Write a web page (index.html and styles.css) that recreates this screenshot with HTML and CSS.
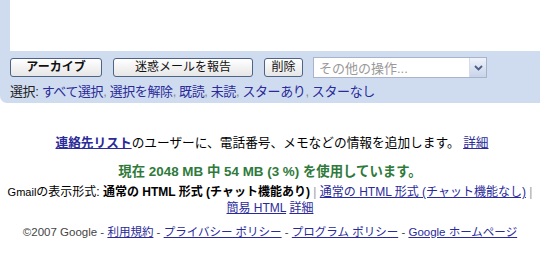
FILE: index.html
```html
<!DOCTYPE html>
<html lang="ja">
<head>
    <meta charset="UTF-8">
    <title>Gmail</title>
    <link rel="stylesheet" href="styles.css">
</head>
<body>
    <div class="panel">
        <div class="list"></div>
        <div class="actions">
            <button class="btn btn-archive">アーカイブ</button>
            <button class="btn btn-spam">迷惑メールを報告</button>
            <button class="btn btn-delete">削除</button>
            <div class="more">
                <span class="more-text">その他の操作...</span>
                <span class="more-arrow">
                    <svg width="9" height="6" viewBox="0 0 9 6"><path d="M1 1 L4.5 4.5 L8 1" fill="none" stroke="#4a5e88" stroke-width="1.8"/></svg>
                </span>
            </div>
        </div>
        <div class="select-row">
            選択: <a href="#">すべて選択</a><span class="sep">,</span>
            <a href="#">選択を解除</a><span class="sep">,</span>
            <a href="#">既読</a><span class="sep">,</span>
            <a href="#">未読</a><span class="sep">,</span>
            <a href="#">スターあり</a><span class="sep">,</span>
            <a href="#">スターなし</a>
        </div>
    </div>

    <p class="tip"><a href="#" class="strong-link">連絡先リスト</a>のユーザーに、電話番号、メモなどの情報を追加します。 <a href="#">詳細</a></p>

    <p class="usage">現在 2048 MB 中 54 MB (3 %) を使用しています。</p>

    <p class="views">
        <span class="gm">Gmail</span>の表示形式: <b>通常の HTML 形式 (チャット機能あり)</b>
        <span class="bar">|</span>
        <a href="#">通常の HTML 形式 (チャット機能なし)</a>
        <span class="bar">|</span>
        <span class="nw"><a href="#">簡易 HTML</a> <a href="#">詳細</a></span>
    </p>

    <p class="footer">©2007 Google - <a href="#">利用規約</a> - <a href="#">プライバシー ポリシー</a> - <a href="#">プログラム ポリシー</a> - <a href="#">Google ホームページ</a></p>
</body>
</html>
```

FILE: styles.css
```css
* {
    box-sizing: border-box;
    margin: 0;
    padding: 0;
}

body {
    font-family: "Liberation Sans", "Noto Sans CJK JP", sans-serif;
    font-size: 13px;
    color: #000;
    background: #fff;
    width: 540px;
}

a {
    color: #2a2a99;
}

.panel {
    background-color: #cfdcf0;
    padding-left: 10px;
    height: 103px;
    border-bottom-left-radius: 7px;
}

.list {
    background: #fff;
    height: 51px;
}

.actions {
    display: flex;
    align-items: center;
    height: 33px;
}

.btn {
    height: 19px;
    font-family: "Liberation Sans", "Noto Sans CJK JP", sans-serif;
    font-size: 12px;
    line-height: 17px;
    color: #111;
    background: linear-gradient(#ffffff, #e6e6e6);
    border: 1px solid #4f6384;
    border-radius: 3px;
    margin-right: 11px;
}

.btn-archive {
    width: 92px;
    font-weight: bold;
}

.btn-spam {
    width: 140px;
}

.btn-delete {
    width: 39px;
    margin-right: 10px;
}

.more {
    width: 174px;
    height: 21px;
    background: #fff;
    border: 1px solid #a8b4cc;
    display: flex;
    align-items: center;
    justify-content: space-between;
}

.more-text {
    color: #999;
    font-size: 13px;
    padding-left: 5px;
}

.more-arrow {
    width: 17px;
    height: 19px;
    background: linear-gradient(#eef2fa, #c9d4ea);
    border-left: 1px solid #d4dcec;
    display: flex;
    align-items: center;
    justify-content: center;
}

.select-row {
    font-size: 13px;
    line-height: 16px;
    color: #222;
    letter-spacing: -0.4px;
}

.select-row a {
    text-decoration: none;
    color: #2a2a99;
}

.sep {
    color: #888;
}

.tip {
    text-align: center;
    margin-top: 32px;
    font-size: 12.7px;
    line-height: 16px;
    padding-left: 4px;
}

.tip .strong-link {
    font-weight: bold;
}

.usage {
    text-align: center;
    margin-top: 13px;
    font-size: 13.4px;
    line-height: 16px;
    font-weight: bold;
    color: #2f7a3b;
}

.views {
    text-align: center;
    margin-top: 4px;
    font-size: 12px;
    line-height: 16px;
    padding: 0 4px;
}

.nw {
    white-space: nowrap;
}

.gm {
    font-size: 11px;
}

.bar {
    color: #999;
}

.footer {
    text-align: center;
    margin-top: 8px;
    font-size: 11.5px;
    color: #444;
    line-height: 16px;
}
```
